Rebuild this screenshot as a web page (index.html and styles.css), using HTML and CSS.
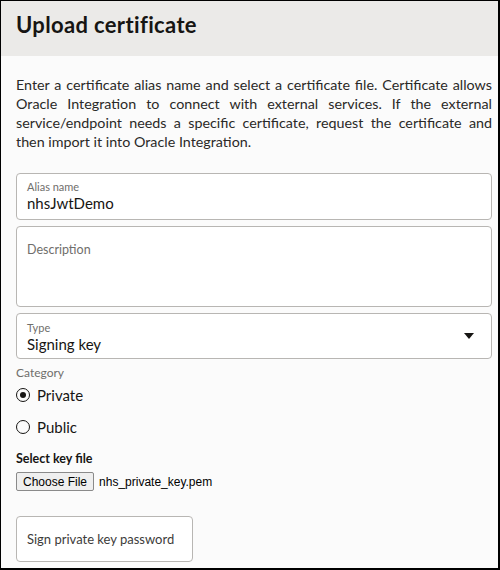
FILE: index.html
```html
<!DOCTYPE html>
<html>
<head>
<meta charset="utf-8">
<link rel="stylesheet" href="styles.css">
</head>
<body>
<div class="frame">
  <header class="head"><h1 class="title">Upload certificate</h1></header>
  <main class="content">
    <p class="intro">Enter a certificate alias name and select a certificate file. Certificate allows Oracle Integration to connect with external services. If the external service/endpoint needs a specific certificate, request the certificate and then import it into Oracle Integration.</p>
    <div class="field field-alias">
      <span class="flabel">Alias name</span>
      <span class="fvalue">nhsJwtDemo</span>
    </div>
    <div class="field field-desc">
      <span class="placeholder">Description</span>
    </div>
    <div class="field field-type">
      <div class="typeinner">
        <span class="flabel">Type</span>
        <span class="fvalue">Signing key</span>
      </div>
      <svg class="caret" width="12" height="8" viewBox="0 0 12 8"><path d="M1 1h10L6 7z" fill="#161513"/></svg>
    </div>
    <div class="seclabel">Category</div>
    <div class="radios">
      <div class="radio"><span class="dot on"></span><span>Private</span></div>
      <div class="radio"><span class="dot"></span><span>Public</span></div>
    </div>
    <div class="keylabel">Select key file</div>
    <div class="filerow"><span class="filebtn">Choose File</span><span class="filename">nhs_private_key.pem</span></div>
    <div class="pwbox">Sign private key password</div>
  </main>
</div>
</body>
</html>
```
FILE: styles.css
```css
html, body { margin: 0; padding: 0; }
body { width: 500px; height: 570px; overflow: hidden; font-family: "Lato", "Noto Sans", sans-serif; color: #161513; }
.frame { box-sizing: border-box; width: 500px; height: 570px; border-style: solid; border-color: #000; border-width: 1px 2px 2px 1px; background: #fbfbfb; overflow: hidden; }
.head { background: #ebeae8; height: 55px; box-sizing: border-box; padding: 0 15px; display: flex; align-items: center; }
.title { margin: 0; font-size: 22px; font-weight: 700; letter-spacing: 0.35px; position: relative; top: -4px; }
.content { padding: 19px 6px 0 15px; }
.intro { margin: 0; font-size: 14.3px; line-height: 19px; text-align: justify; color: #2a2927; }
.field { box-sizing: border-box; border: 1px solid #b8b6b3; border-radius: 4px; background: #fff; }
.field-alias { margin-top: 22px; height: 47px; padding: 6px 10px 0; display: flex; flex-direction: column; }
.flabel { font-size: 11px; line-height: 13px; color: #6f6e6b; }
.fvalue { font-size: 15px; line-height: 20px; color: #161513; }
.field-desc { margin-top: 6px; height: 81px; padding: 11px 10px 0; }
.placeholder { font-size: 12.5px; color: #6f6e6b; }
.field-type { margin-top: 6px; height: 46px; padding: 7px 16px 0 10px; display: flex; justify-content: space-between; align-items: flex-start; }
.typeinner { display: flex; flex-direction: column; }
.caret { margin-top: 11px; }
.seclabel { margin-top: 6px; font-size: 12px; line-height: 16px; color: #6f6e6b; }
.radios { display: flex; flex-direction: column; gap: 12px; margin-top: 4px; }
.radio { display: flex; align-items: center; gap: 7px; font-size: 15px; line-height: 20px; height: 20px; }
.dot { box-sizing: border-box; width: 14px; height: 14px; border: 1.5px solid #161513; border-radius: 50%; display: inline-flex; align-items: center; justify-content: center; }
.dot.on::after { content: ""; width: 6px; height: 6px; border-radius: 50%; background: #161513; }
.keylabel { margin-top: 14px; font-size: 12.5px; font-weight: 700; line-height: 16px; color: #161513; }
.filerow { margin-top: 5px; display: flex; align-items: center; gap: 5px; font-family: "Liberation Sans", Arial, sans-serif; font-size: 12px; }
.filebtn { box-sizing: border-box; height: 19px; padding: 0 6px; border: 1px solid #8a8a8a; border-radius: 2px; background: #efefef; display: inline-flex; align-items: center; color: #000; }
.filename { color: #000; }
.pwbox { margin-top: 25px; box-sizing: border-box; width: 177px; height: 46px; border: 1px solid #b8b6b3; border-radius: 4px; background: #fff; font-size: 13px; color: #3d3c3a; padding: 0 10px; display: flex; align-items: center; }
```
